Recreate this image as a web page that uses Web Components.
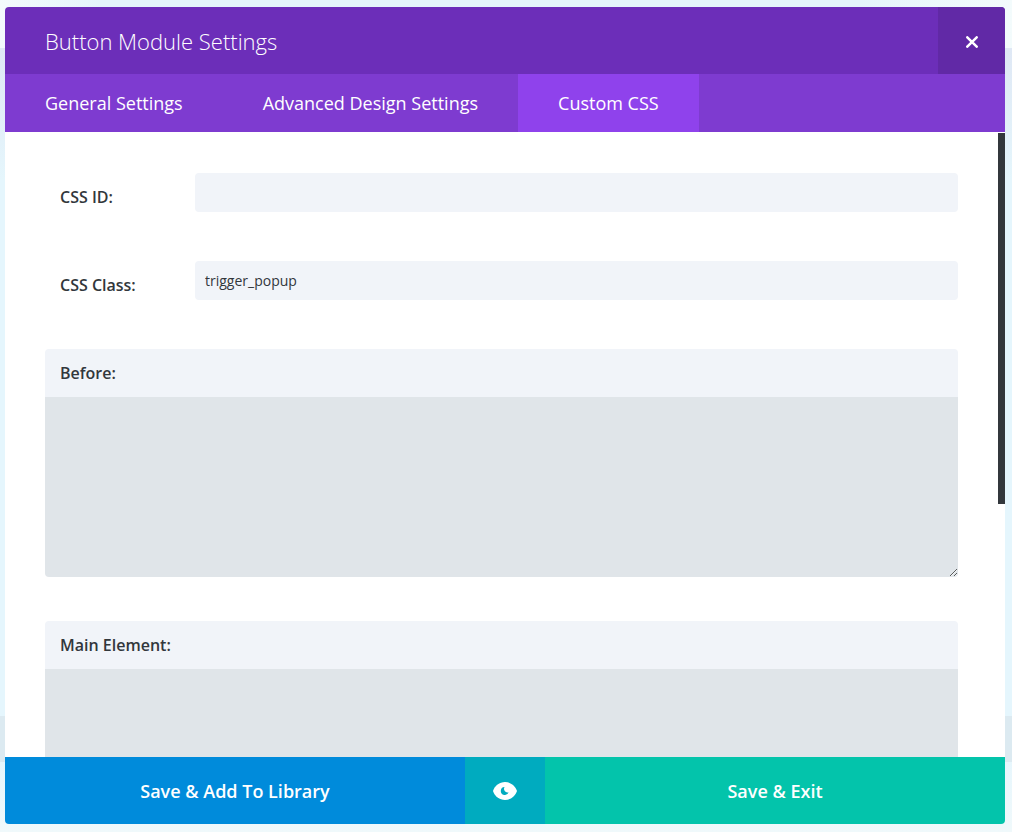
<!DOCTYPE html>
<html lang="en">
<head>
<meta charset="utf-8">
<title>Button Module Settings</title>
<style>
  * { box-sizing: border-box; }
  body {
    margin: 0;
    height: 100vh;
    padding: 7px 7px 8px 5px;
    overflow: hidden;
    font-family: "Open Sans", sans-serif;
    color: #32373c;
    background:
      linear-gradient(#dceaf1, #dceaf1) 0 716px / 100% 46px no-repeat,
      linear-gradient(#dfe8f5, #e5f6fc) 0 48px / 100% 132px no-repeat,
      linear-gradient(90deg, #f3fbfc, #e5f5fb 10%, #e5f5fb 85%, #f3fbfc) 0 0 / 100% 48px no-repeat,
      linear-gradient(#e5f6fd 90%, #f0f9fb);
  }
</style>
</head>
<body>
<settings-modal heading="Button Module Settings">
  <settings-tab slot="tabs">General Settings</settings-tab>
  <settings-tab slot="tabs">Advanced Design Settings</settings-tab>
  <settings-tab slot="tabs" active>Custom CSS</settings-tab>
  <text-option label="CSS ID:"></text-option>
  <text-option label="CSS Class:" value="trigger_popup"></text-option>
  <code-option label="Before:"></code-option>
  <code-option label="Main Element:"></code-option>
  <footer-action slot="actions" class="library" style="--fill:#008bdb">Save &amp; Add To Library</footer-action>
  <preview-action slot="actions"></preview-action>
  <footer-action slot="actions" class="exit" style="--fill:#03c4ab">Save &amp; Exit</footer-action>
</settings-modal>

<script>
class Base extends HTMLElement {
  constructor() {
    super();
    this.attachShadow({ mode: "open" });
  }
  connectedCallback() {
    this.shadowRoot.innerHTML = "<style>*{box-sizing:border-box}</style>" + this.render();
  }
  attr(name) { return this.getAttribute(name) || ""; }
}

customElements.define("settings-modal", class extends Base {
  render() {
    return `
    <style>
      :host { display: flex; flex-direction: column; height: 100%; background: #fff; border-radius: 4px; overflow: hidden; }
      header { display: flex; flex: none; height: 67px; background: #6c2eb9; color: #fff; }
      h1 { flex: 1; margin: 0; padding: 0 40px; font-size: 22px; line-height: 68px; font-weight: 300; }
      .close { width: 67px; border: 0; padding: 0; background: #6129a6; display: grid; place-items: center; color: #fff; }
      .close svg { display: block; margin-top: 2px; }
      nav { display: flex; flex: none; height: 58px; background: #7e3bd0; }
      .body { position: relative; flex: 1; min-height: 0; }
      .scroll { height: 100%; overflow-y: auto; scrollbar-width: none; padding: 41px 47px 40px 40px; }
      .thumb { position: absolute; top: 1px; right: 0; width: 7px; height: 371px; background: #32373c; }
      footer { display: flex; flex: none; height: 67px; }
    </style>
    <header>
      <h1>${this.attr("heading")}</h1>
      <button class="close" aria-label="Close">
        <svg width="12" height="12" viewBox="0 0 12 12"><path d="M1.300 1.300 10.700 10.700M10.700 1.300 1.300 10.700" stroke="currentColor" stroke-width="2.500" stroke-linecap="round"/></svg>
      </button>
    </header>
    <nav><slot name="tabs"></slot></nav>
    <div class="body">
      <div class="scroll"><slot></slot></div>
      <div class="thumb"></div>
    </div>
    <footer><slot name="actions"></slot></footer>`;
  }
});

customElements.define("settings-tab", class extends Base {
  render() {
    return `
    <style>
      :host { display: block; }
      :host([active]) { background: #8f42ec; }
      a { display: block; padding: 0 40px; font-size: 18px; line-height: 58px; font-weight: 500; color: #fff; text-decoration: none; white-space: nowrap; }
    </style>
    <a href="#"><slot></slot></a>`;
  }
});

customElements.define("text-option", class extends Base {
  render() {
    return `
    <style>
      :host { display: flex; margin-bottom: 49px; }
      label { flex: none; width: 150px; padding: 0 0 0 15px; font-size: 16px; line-height: 48px; height: 39px; font-weight: 600; }
      input { flex: 1; min-width: 0; height: 39px; margin: 0; padding: 0 10px; border: 0; border-radius: 4px; background: #f1f4f9; color: #32373c; font: 400 14px "Open Sans", sans-serif; outline: 0; }
    </style>
    <label for="field">${this.attr("label")}</label>
    <input id="field" type="text" value="${this.attr("value")}">`;
  }
});

customElements.define("code-option", class extends Base {
  render() {
    return `
    <style>
      :host { display: block; margin-bottom: 44px; border-radius: 4px; overflow: hidden; }
      label { display: block; padding: 0 15px; font-size: 16px; line-height: 48px; font-weight: 600; background: #f1f4f9; }
      textarea { display: block; width: 100%; height: 180px; margin: 0; padding: 15px; border: 0; background: #e0e5e9; resize: vertical; outline: 0; font: 14px "Open Sans", sans-serif; }
    </style>
    <label for="code">${this.attr("label")}</label>
    <textarea id="code"></textarea>`;
  }
});

customElements.define("footer-action", class extends Base {
  render() {
    return `
    <style>
      :host { display: block; flex: 1; }
      button { width: 100%; height: 100%; border: 0; padding: 0; background: var(--fill); color: #fff; font: 600 18px "Open Sans", sans-serif; }
    </style>
    <button><slot></slot></button>`;
  }
});

customElements.define("preview-action", class extends Base {
  render() {
    return `
    <style>
      :host { display: block; flex: none; width: 80px; }
      button { width: 100%; height: 100%; border: 0; padding: 1px 0 0; background: #00abbf; display: grid; place-items: center; }
      svg { display: block; }
    </style>
    <button aria-label="Preview">
      <svg width="24" height="18" viewBox="0 0 24 18">
        <path fill="#fff" d="M12 0C6.500 0 1.800 3.700 0 9c1.800 5.300 6.500 9 12 9s10.200-3.700 12-9C22.200 3.700 17.500 0 12 0Z"/>
        <path fill="#00abbf" d="M11.500 5A4 4 0 1 0 15.600 10.200 3.500 3.500 0 0 1 11.500 5Z"/>
      </svg>
    </button>`;
  }
});
</script>
</body>
</html>
